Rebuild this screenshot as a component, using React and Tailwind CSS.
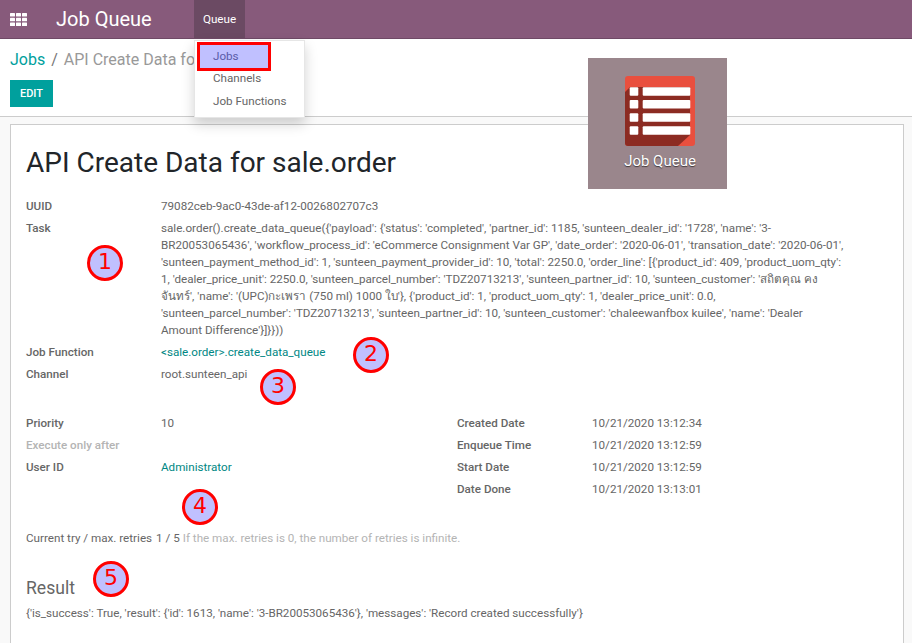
import React from 'react';

const taskLines = [
    "sale.order().create_data_queue({'payload': {'status': 'completed', 'partner_id': 1185, 'sunteen_dealer_id': '1728', 'name': '3-",
    "BR20053065436', 'workflow_process_id': 'eCommerce Consignment Var GP', 'date_order': '2020-06-01', 'transation_date': '2020-06-01',",
    "'sunteen_payment_method_id': 1, 'sunteen_payment_provider_id': 10, 'total': 2250.0, 'order_line': [{'product_id': 409, 'product_uom_qty':",
    "1, 'dealer_price_unit': 2250.0, 'sunteen_parcel_number': 'TDZ20713213', 'sunteen_partner_id': 10, 'sunteen_customer': 'สถิตคุณ คง",
    "จันทร์', 'name': '(UPC)กะเพรา (750 ml) 1000 ใบ'}, {'product_id': 1, 'product_uom_qty': 1, 'dealer_price_unit': 0.0,",
    "'sunteen_parcel_number': 'TDZ20713213', 'sunteen_partner_id': 10, 'sunteen_customer': 'chaleewanfbox kuilee', 'name': 'Dealer",
    "Amount Difference'}]}}))",
];

const Marker = ({ n, className }) => (
    <div className={`absolute w-9 h-9 rounded-full bg-[#c0c0ff] border-[3.5px] border-[#ff0000] text-[#ff0000] font-['DejaVu_Sans',sans-serif] text-[22px] leading-[28px] text-center ${className}`}>
        {n}
    </div>
);

const Row = ({ label, children, muted }) => (
    <div className="flex pb-[5px]">
        <div className={`w-[135px] shrink-0 font-medium ${muted ? 'text-[#b4b4b4]' : 'text-[#666666]'}`}>{label}</div>
        <div className="text-[#666666]">{children}</div>
    </div>
);

const AppIcon = () => (
    <svg width="70" height="70" viewBox="0 0 70 70">
        <rect width="70" height="70" rx="3" fill="#e94f3e" />
        <path d="M0 16 L5 11 L65 11 L65 59 L53 70 L3 70 Q0 70 0 67 Z" fill="#8c2b22" />
        {[11.3, 24, 37.3, 50.3].map((y) => (
            <g key={y}>
                <rect x="4.7" y={y} width="8.6" height="8.4" rx="1" fill="#ffffff" />
                <rect x="17.7" y={y} width="47.6" height="8.4" rx="1" fill="#ffffff" />
            </g>
        ))}
    </svg>
);

const App = () => {
    return (
        <div className="relative w-[912px] h-[643px] overflow-hidden bg-[#f9f9f9] text-[11.65px] leading-[17px] text-[#666666] font-['Roboto','Noto_Sans',sans-serif]">
            {/* Top bar */}
            <div className="h-[39px] bg-[#875a7b] border-b border-[#6f4a66] flex items-stretch text-white">
                <div className="w-[56px] pl-[10px] flex items-center">
                    <svg width="17" height="13" viewBox="0 0 17 13" fill="#ffffff">
                        {[0, 4.7, 9.4].map((y) =>
                            [0, 6, 12].map((x) => <rect key={`${x}-${y}`} x={x} y={y} width="5" height="3.6" rx="0.5" />)
                        )}
                    </svg>
                </div>
                <div className="w-[138px] text-[20px] flex items-center">Job Queue</div>
                <div className="w-[51px] bg-[#6b4a63] flex items-center justify-center">Queue</div>
            </div>

            {/* Control panel */}
            <div className="h-[78px] bg-white border-b border-[#cccccc] pl-[10px]">
                <div className="pt-[10px] h-[41px] text-[16px] leading-[22px] text-[#999999]">
                    <span className="text-[#00a09d]">Jobs</span>
                    <span className="text-[#777777] mx-[6px]">/</span>
                    <span>API Create Data for sale.order</span>
                </div>
                <button className="w-[43px] h-[27px] bg-[#00a09d] text-white text-[11px] font-medium uppercase">Edit</button>
            </div>

            {/* Form sheet */}
            <div className="mx-[10px] mt-[7px] w-[894px] h-[600px] bg-white border border-[#cccccc] pl-[15px] pt-[20px]">
                <h1 className="text-[28px] leading-[36px] text-[#212529] mb-[17px]">API Create Data for sale.order</h1>
                <div>
                    <Row label="UUID">79082ceb-9ac0-43de-af12-0026802707c3</Row>
                    <Row label="Task">
                        {taskLines.map((line) => (
                            <div key={line} className="whitespace-nowrap">{line}</div>
                        ))}
                    </Row>
                    <Row label="Job Function"><span className="text-[#008784]">&lt;sale.order&gt;.create_data_queue</span></Row>
                    <Row label="Channel">root.sunteen_api</Row>
                </div>
                <div className="flex mt-[27px]">
                    <div className="w-[431px]">
                        <Row label="Priority">10</Row>
                        <Row label="Execute only after" muted />
                        <Row label="User ID"><span className="text-[#008784]">Administrator</span></Row>
                    </div>
                    <div>
                        <Row label="Created Date">10/21/2020 13:12:34</Row>
                        <Row label="Enqueue Time">10/21/2020 13:12:59</Row>
                        <Row label="Start Date">10/21/2020 13:12:59</Row>
                        <Row label="Date Done">10/21/2020 13:13:01</Row>
                    </div>
                </div>
                <div className="mt-[27px]">
                    Current try / max. retries
                    <span className="ml-[4px]">1 / 5</span>
                    <span className="ml-[3px] text-[#b4b4b4]">If the max. retries is 0, the number of retries is infinite.</span>
                </div>
                <h2 className="mt-[29px] text-[17.6px] leading-[24px] text-[#666666]">Result</h2>
                <div className="mt-[5px]">{"{'is_success': True, 'result': {'id': 1613, 'name': '3-BR20053065436'}, 'messages': 'Record created successfully'}"}</div>
            </div>

            {/* Queue dropdown */}
            <div className="absolute left-[194px] top-[40px] w-[111px] h-[78px] bg-white border border-[#e6e6e6] shadow-[0_6px_12px_rgba(0,0,0,0.18)]">
                <div className="absolute left-[2px] top-[1px] w-[74px] h-[29px] bg-[#c0c0ff] border-[3px] border-[#ff0000] pl-[13px] leading-[23px] text-[#5b5ba8]">Jobs</div>
                <div className="absolute left-[18px] top-[29px]">Channels</div>
                <div className="absolute left-[18px] top-[52px] whitespace-nowrap">Job Functions</div>
            </div>

            {/* App tile overlay */}
            <div className="absolute left-[588px] top-[58px] w-[139px] h-[131px] bg-[#9a868c] flex flex-col items-center pt-[18px] pl-[5px]">
                <AppIcon />
                <div className="mt-[6px] text-[15px] leading-[18px] text-white [text-shadow:0_1px_1px_rgba(0,0,0,0.6)]">Job Queue</div>
            </div>

            {/* Numbered markers */}
            <Marker n="1" className="left-[87px] top-[245px]" />
            <Marker n="2" className="left-[353px] top-[337px]" />
            <Marker n="3" className="left-[260px] top-[369px]" />
            <Marker n="4" className="left-[182px] top-[489px]" />
            <Marker n="5" className="left-[93px] top-[561px]" />
        </div>
    );
};

export default App;
